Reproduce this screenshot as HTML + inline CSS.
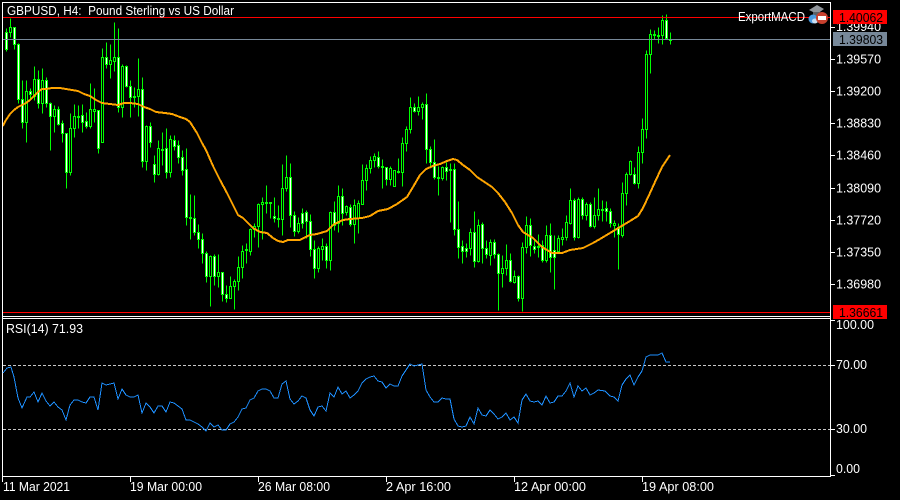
<!DOCTYPE html>
<html><head><meta charset="utf-8"><title>GBPUSD H4</title>
<style>
html,body{margin:0;padding:0;background:#000;width:900px;height:500px;overflow:hidden}
svg{display:block}
text{font-family:"Liberation Sans",sans-serif;font-size:12.5px;fill:#fff}
</style></head><body>
<svg width="900" height="500" viewBox="0 0 900 500" xmlns="http://www.w3.org/2000/svg">
<rect width="900" height="500" fill="#000"/>
<g transform="translate(.5,.5)" shape-rendering="crispEdges" fill="none">
<path stroke="#0f0" d="M2 49V53M6 28V51M10 18V37M14 27V49M18 43V103M22 80V128M26 80V142M30 88V100M34 66V100M38 70V108M42 68V113M46 77V107M50 102V150M54 105V132M58 106V125M62 120V142M66 133V188M70 113V175M74 104V137M78 105V128M82 104V132M86 112V128M90 83V128M94 88V122M98 110V153M102 48V142M106 42V68M110 44V78M114 22V71M118 28V112M122 64V117M126 65V87M130 80V117M134 87V107M138 58V116M142 77V167M146 125V170M150 122V147M154 155V182M158 140V175M162 132V165M166 128V178M170 135V177M174 135V150M178 140V163M182 150V175M186 148V225M190 194V239M194 195V235M198 224V248M202 233V263M206 251V282M210 255V306M214 254V285M218 254V287M222 272V301M226 285V302M230 276V298M234 279V309M238 256V290M242 245V278M246 243V263M250 228V255M254 223V237M258 203V247M262 197V239M266 185V213M270 202V218M274 197V222M278 205V227M282 164V235M286 155V191M290 163V227M294 211V236M298 217V233M302 208V228M306 210V238M310 214V256M314 240V278M318 246V272M322 238V260M326 243V268M330 211V270M334 201V230M338 185V232M342 188V225M346 205V215M350 204V226M354 199V243M358 200V233M362 164V204M366 164V190M370 156V173M374 153V167M378 151V168M382 159V188M386 167V185M390 166V185M394 170V186M398 158V173M402 137V186M406 126V151M410 97V133M414 103V112M418 96V115M422 102V119M426 93V163M430 146V166M434 139V179M438 166V195M442 166V180M446 162V180M450 163V222M454 163V235M458 201V258M462 240V263M466 243V257M470 228V255M474 211V267M478 219V262M482 222V263M486 240V258M490 239V265M494 239V258M498 253V310M502 255V287M506 244V275M510 253V282M514 270V283M518 275V301M522 242V311M526 216V253M530 218V256M534 240V253M538 234V257M542 240V262M546 225V262M550 223V272M554 235V289M558 235V252M562 228V245M566 215V240M570 188V224M574 198V240M578 197V238M582 197V219M586 202V220M590 202V227M594 197V228M598 188V220M602 200V221M606 201V221M610 208V227M614 220V237M618 223V269M622 182V237M626 172V205M630 160V175M634 167V184M638 146V188M642 118V163M646 50V138M650 29V73M654 30V39M658 27V43M662 15V44M666 14V39M670 32V44"/>
<path stroke="#0f0" fill="#000" d="M9 27h2v5h-2zM25 91h2v31h-2zM33 79h2v17h-2zM41 80h2v23h-2zM53 109h2v7h-2zM69 128h2v44h-2zM73 116h2v12h-2zM77 116h2v1h-2zM89 109h2v17h-2zM93 109h2v2h-2zM101 57h2v85h-2zM109 60h2v4h-2zM113 57h2v4h-2zM121 66h2v41h-2zM133 96h2v1h-2zM137 89h2v7h-2zM145 126h2v35h-2zM157 148h2v26h-2zM161 149h2v1h-2zM169 139h2v33h-2zM209 256h2v20h-2zM217 272h2v4h-2zM229 286h2v12h-2zM233 281h2v5h-2zM237 267h2v14h-2zM241 251h2v16h-2zM245 249h2v1h-2zM249 229h2v22h-2zM253 226h2v3h-2zM257 204h2v22h-2zM261 202h2v2h-2zM265 202h2v1h-2zM269 202h2v1h-2zM277 218h2v1h-2zM281 188h2v31h-2zM285 177h2v11h-2zM297 223h2v8h-2zM317 248h2v20h-2zM321 246h2v3h-2zM329 212h2v48h-2zM337 196h2v27h-2zM345 206h2v6h-2zM353 205h2v19h-2zM357 203h2v15h-2zM361 180h2v24h-2zM365 168h2v12h-2zM369 160h2v8h-2zM373 156h2v4h-2zM381 166h2v1h-2zM389 168h2v11h-2zM393 170h2v16h-2zM397 171h2v1h-2zM401 143h2v29h-2zM405 129h2v14h-2zM409 107h2v22h-2zM417 107h2v4h-2zM421 104h2v3h-2zM437 177h2v1h-2zM441 167h2v11h-2zM449 169h2v1h-2zM469 232h2v16h-2zM477 225h2v36h-2zM489 242h2v13h-2zM501 268h2v5h-2zM505 260h2v8h-2zM513 276h2v6h-2zM521 247h2v51h-2zM525 225h2v22h-2zM537 246h2v1h-2zM545 235h2v25h-2zM557 238h2v13h-2zM561 237h2v2h-2zM565 222h2v15h-2zM569 200h2v23h-2zM577 199h2v38h-2zM585 204h2v11h-2zM593 215h2v11h-2zM597 209h2v6h-2zM601 209h2v1h-2zM613 223h2v2h-2zM621 193h2v42h-2zM625 174h2v19h-2zM629 161h2v13h-2zM637 152h2v31h-2zM641 129h2v23h-2zM645 54h2v75h-2zM649 34h2v20h-2zM653 34h2v1h-2zM657 35h2v1h-2zM661 20h2v15h-2zM669 39h2v1h-2z"/>
<path stroke="#0f0" fill="#fff" d="M5 32h2v17h-2zM13 27h2v17h-2zM17 44h2v55h-2zM21 99h2v23h-2zM29 91h2v3h-2zM37 79h2v24h-2zM45 80h2v23h-2zM49 103h2v13h-2zM57 109h2v15h-2zM61 123h2v10h-2zM65 133h2v39h-2zM81 115h2v7h-2zM85 121h2v5h-2zM97 110h2v38h-2zM105 57h2v7h-2zM117 57h2v50h-2zM125 66h2v20h-2zM129 86h2v11h-2zM141 89h2v72h-2zM149 126h2v16h-2zM153 164h2v10h-2zM165 148h2v24h-2zM173 140h2v6h-2zM177 145h2v12h-2zM181 157h2v13h-2zM185 169h2v48h-2zM189 217h2v1h-2zM193 218h2v14h-2zM197 232h2v7h-2zM201 239h2v14h-2zM205 253h2v23h-2zM213 256h2v20h-2zM221 272h2v22h-2zM225 294h2v4h-2zM273 216h2v2h-2zM289 177h2v38h-2zM293 215h2v16h-2zM301 213h2v10h-2zM305 212h2v9h-2zM309 221h2v28h-2zM313 249h2v19h-2zM325 246h2v14h-2zM333 212h2v13h-2zM341 196h2v17h-2zM349 207h2v17h-2zM377 157h2v9h-2zM385 167h2v12h-2zM413 107h2v4h-2zM425 104h2v45h-2zM429 149h2v13h-2zM433 162h2v15h-2zM445 167h2v4h-2zM453 169h2v60h-2zM457 229h2v18h-2zM461 246h2v5h-2zM465 248h2v3h-2zM473 232h2v29h-2zM481 224h2v24h-2zM485 248h2v6h-2zM493 242h2v12h-2zM497 254h2v19h-2zM509 260h2v21h-2zM517 276h2v22h-2zM529 225h2v20h-2zM533 246h2v3h-2zM541 245h2v15h-2zM549 235h2v22h-2zM553 250h2v7h-2zM573 200h2v37h-2zM581 199h2v16h-2zM589 204h2v22h-2zM605 208h2v3h-2zM609 211h2v12h-2zM617 227h2v7h-2zM633 174h2v9h-2zM665 20h2v18h-2z"/>
</g>
<path fill="none" stroke="#ffa500" stroke-width="2" shape-rendering="crispEdges" d="M3 126L6 120 10 114 14 110 18 107 22 105 26 103 30 100 34 96 38 92 42 89 46 89 52 88 60 88 66 89 72 90 78 91 84 94 90 96 96 100 102 103 110 104 118 105 124 103 130 103 138 104 144 107 150 109 156 112 165 113 172 114 180 117 186 119 190 122 197 133 202 143 206 150 213 166 220 180 227 193 233 205 238 215 243 218 247 222 253 228 260 232 267 233 273 238 278 241 283 242 288 240 300 240 310 235 317 234 327 231 333 225 343 220 350 219 362 218 370 216 378 211 388 209 397 204 407 197 413 187 420 175 426 169 433 166 440 164 447 161 453 159 457 160 463 165 470 170 477 177 483 181 492 187 498 193 505 202 512 213 518 225 523 232 533 238 542 247 552 253 562 253 570 250 583 248 593 243 600 239 610 233 620 227 630 221 638 216 643 208 650 193 655 182 662 167 670 155"/>
<g shape-rendering="crispEdges">
<rect x="3" y="17" width="827" height="1" fill="#f00"/>
<rect x="3" y="39" width="827" height="1" fill="#778899"/>
<rect x="3" y="312" width="827" height="1" fill="#f00"/>
<path fill="none" stroke="#fff" d="M2.5 2V476.5M2 2.5H830.5V476.5H2M2 316.5H830M2 318.5H830M2.5 476V482M130.5 476V482M258.5 476V482M386.5 476V482M514.5 476V482M642.5 476V482M830 27.5h5M830 59.5h5M830 91.5h5M830 123.5h5M830 155.5h5M830 188.5h5M830 220.5h5M830 252.5h5M830 284.5h5M830 320.5h5M830 365.5h5M830 429.5h5M830 475.5h5"/>
<path fill="none" stroke="#c8c8c8" stroke-dasharray="3 2" d="M3 365.5H830M3 429.5H830"/>
</g>
<path fill="none" stroke="#1e90ff" shape-rendering="crispEdges" d="M3 373L7 368 11 367 14 377 18 398 22 408 27 397 30 397 34 392 38 402 42 393 46 401 50 406 54 402 58 407 62 410 66 420 70 405 74 400 78 400 82 402 86 403 90 397 94 397 98 410 102 383 106 385 110 384 114 383 118 399 122 389 126 395 130 397 134 397 138 395 142 413 146 403 150 407 154 413 158 406 162 406 166 412 170 402 174 403 178 406 182 409 186 420 190 420 194 422 198 424 202 427 206 431 210 423 214 427 218 425 222 430 226 430 230 424 234 422 238 417 242 409 246 408 250 400 254 398 258 391 262 389 266 389 270 391 274 398 278 398 282 384 286 381 290 399 294 404 298 401 302 396 306 398 310 410 314 416 318 407 322 406 326 411 330 393 334 397 338 387 342 394 346 391 350 398 354 395 358 391 362 383 366 379 370 377 374 376 378 381 382 382 386 388 390 384 394 386 398 386 402 376 406 370 410 364 414 366 418 365 422 364 426 390 430 397 434 402 438 402 442 398 446 399 450 399 454 419 458 426 462 427 466 426 470 417 474 424 478 408 482 415 486 416 490 410 494 414 498 419 502 417 506 413 510 420 514 417 518 423 522 400 526 394 530 401 534 402 538 401 542 405 546 396 550 403 554 402 558 396 562 396 566 391 570 383 574 397 578 386 582 391 586 388 590 395 594 393 598 390 605 391 610 396 614 397 618 401 622 385 626 379 630 375 634 385 638 377 642 371 646 357 650 355 658 355 662 353 666 362 670 362"/>
<text x="7" y="15" xml:space="preserve" textLength="227" lengthAdjust="spacingAndGlyphs">GBPUSD, H4:  Pound Sterling vs US Dollar</text>
<text x="738" y="21" textLength="67" lengthAdjust="spacingAndGlyphs">ExportMACD</text>
<text x="6" y="333" textLength="77" lengthAdjust="spacingAndGlyphs">RSI(14) 71.93</text>
<!-- icon -->
<path fill="#8f949a" d="M809 10l8-5 7 4-7 5z"/>
<path fill="#5d6166" d="M813 12h7v4l-3 1-4-1z"/>
<ellipse cx="813" cy="19" rx="4.5" ry="4.5" fill="#4a9be0"/>
<ellipse cx="815" cy="21" rx="3" ry="2.5" fill="#c9dff2"/>
<circle cx="822" cy="18" r="6" fill="#c8402e"/>
<rect x="818" y="16" width="8" height="4" fill="#fff"/>
<g>
<text x="836" y="31" textLength="45" lengthAdjust="spacingAndGlyphs">1.39940</text>
<text x="836" y="63.5" textLength="45" lengthAdjust="spacingAndGlyphs">1.39570</text>
<text x="836" y="95.5" textLength="45" lengthAdjust="spacingAndGlyphs">1.39200</text>
<text x="836" y="127.5" textLength="45" lengthAdjust="spacingAndGlyphs">1.38830</text>
<text x="836" y="159.5" textLength="45" lengthAdjust="spacingAndGlyphs">1.38460</text>
<text x="836" y="192.5" textLength="45" lengthAdjust="spacingAndGlyphs">1.38090</text>
<text x="836" y="224.5" textLength="45" lengthAdjust="spacingAndGlyphs">1.37720</text>
<text x="836" y="256.5" textLength="45" lengthAdjust="spacingAndGlyphs">1.37350</text>
<text x="836" y="288.5" textLength="45" lengthAdjust="spacingAndGlyphs">1.36980</text>
<text x="836" y="329" textLength="38" lengthAdjust="spacingAndGlyphs">100.00</text>
<text x="836" y="369" textLength="31" lengthAdjust="spacingAndGlyphs">70.00</text>
<text x="836" y="433" textLength="31" lengthAdjust="spacingAndGlyphs">30.00</text>
<text x="836" y="473" textLength="24" lengthAdjust="spacingAndGlyphs">0.00</text>
</g>
<rect x="833" y="10" width="54" height="14" fill="#f00"/>
<text x="839" y="22" textLength="44" lengthAdjust="spacingAndGlyphs" style="fill:#000">1.40062</text>
<rect x="833" y="32" width="54" height="14" fill="#778899"/>
<text x="839" y="44" textLength="44" lengthAdjust="spacingAndGlyphs" style="fill:#000">1.39803</text>
<rect x="833" y="305" width="54" height="14" fill="#f00"/>
<text x="839" y="317" textLength="44" lengthAdjust="spacingAndGlyphs" style="fill:#000">1.36661</text>
<text x="3" y="491" textLength="67" lengthAdjust="spacingAndGlyphs">11 Mar 2021</text>
<text x="130" y="491" textLength="72" lengthAdjust="spacingAndGlyphs">19 Mar 00:00</text>
<text x="258" y="491" textLength="72" lengthAdjust="spacingAndGlyphs">26 Mar 08:00</text>
<text x="386" y="491" textLength="65" lengthAdjust="spacingAndGlyphs">2 Apr 16:00</text>
<text x="514" y="491" textLength="72" lengthAdjust="spacingAndGlyphs">12 Apr 00:00</text>
<text x="642" y="491" textLength="72" lengthAdjust="spacingAndGlyphs">19 Apr 08:00</text>
</svg>
</body></html>
